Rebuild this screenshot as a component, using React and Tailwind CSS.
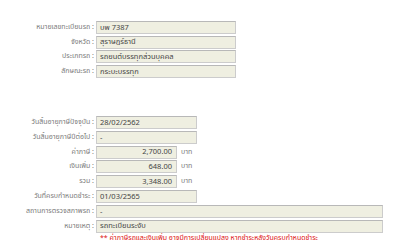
import React from "react";

const font = { fontFamily: '"Tahoma", "Noto Sans Thai", "Liberation Sans", sans-serif' };

// --- Read-only field box ---
const Field = ({ value, width, right }) => (
    <div
        className={`h-[13px] ${width} bg-[#efefe1] border border-[#cccccc] border-t-[#b8b8b8] flex items-center px-[3px] text-[7.5px] leading-none text-[#444] ${right ? "justify-end pr-[4px]" : ""}`}
    >
        {value}
    </div>
);

const Row = ({ label, children }) => (
    <div className="flex items-center h-[14.8px]">
        <div className="w-[96px] pr-[2px] text-right text-[7px] leading-none text-[#7a7a7a] whitespace-nowrap">
            {label} :
        </div>
        {children}
    </div>
);

const vehicle = [
    ["หมายเลขทะเบียนรถ", "บพ 7387"],
    ["จังหวัด", "สุราษฎร์ธานี"],
    ["ประเภทรถ", "รถยนต์บรรทุกส่วนบุคคล"],
    ["ลักษณะรถ", "กระบะบรรทุก"],
];

const money = [
    ["ค่าภาษี", "2,700.00"],
    ["เงินเพิ่ม", "648.00"],
    ["รวม", "3,348.00"],
];

export default function App() {
    return (
        <div className="w-[400px] h-[250px] bg-white overflow-hidden" style={font}>
            <div className="pt-[20px] flex flex-col">
                {vehicle.map(([label, value]) => (
                    <Row key={label} label={label}>
                        <Field value={value} width="w-[140px]" />
                    </Row>
                ))}
            </div>

            <div className="pt-[36px] flex flex-col">
                <Row label="วันสิ้นอายุภาษีปัจจุบัน">
                    <Field value="28/02/2562" width="w-[101px]" />
                </Row>
                <Row label="วันสิ้นอายุภาษีปีต่อไป">
                    <Field value="-" width="w-[101px]" />
                </Row>
                {money.map(([label, value]) => (
                    <Row key={label} label={label}>
                        <Field value={value} width="w-[81px]" right />
                        <span className="ml-[4px] text-[7px] leading-none text-[#7a7a7a]">บาท</span>
                    </Row>
                ))}
                <Row label="วันที่ครบกำหนดชำระ">
                    <Field value="01/03/2565" width="w-[101px]" />
                </Row>
                <Row label="สถานการตรวจสภาพรถ">
                    <Field value="-" width="w-[287px]" />
                </Row>
                <Row label="หมายเหตุ">
                    <Field value="รถทะเบียนระงับ" width="w-[287px]" />
                </Row>
                <p className="ml-[100px] mt-[1px] text-[7px] leading-none text-[#d11]">
                    ** ค่าภาษีรถและเงินเพิ่ม อาจมีการเปลี่ยนแปลง หากชำระหลังวันครบกำหนดชำระ
                </p>
            </div>
        </div>
    );
}
